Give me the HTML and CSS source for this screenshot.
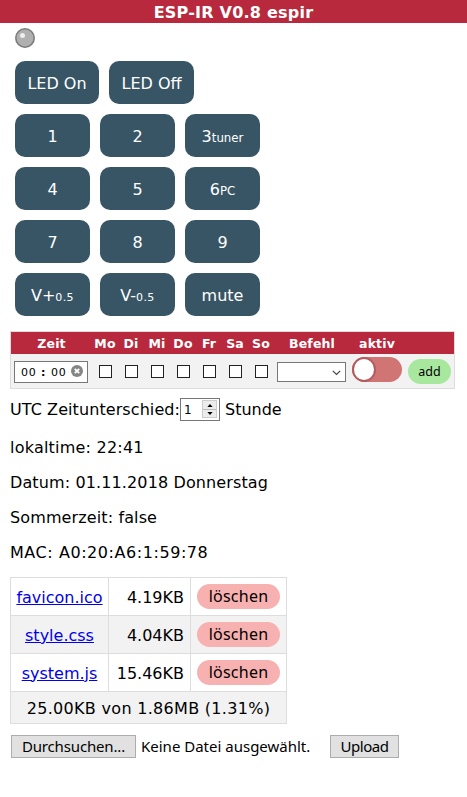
FILE: index.html
```html
<!DOCTYPE html>
<html lang="de">
<head>
<meta charset="utf-8">
<title>ESP-IR</title>
<link rel="stylesheet" href="styles.css">
</head>
<body>
<header><span class="t-title">ESP-IR V0.8 espir</span></header>
<main>
<svg class="led" width="20" height="20" viewBox="0 0 20 20"><circle cx="10" cy="10" r="9.2" fill="#b0b0b0" stroke="#7c7c7c" stroke-width="1.6"/><circle cx="7.5" cy="7.5" r="2.5" fill="#eee"/></svg>
<div class="keys leds"><button class="k-on">LED On</button><button class="k-off">LED Off</button></div>
<div class="keys pad">
<button>1</button><button>2</button><button>3<small>tuner</small></button>
<button>4</button><button>5</button><button>6<small>PC</small></button>
<button>7</button><button>8</button><button>9</button>
<button>V+<small class="step">0.5</small></button><button>V-<small class="step">0.5</small></button><button>mute</button>
</div>
<section class="timer">
<div class="row head"><span>Zeit</span><span>Mo</span><span>Di</span><span>Mi</span><span>Do</span><span>Fr</span><span>Sa</span><span>So</span><span>Befehl</span><span>aktiv</span><span></span></div>
<div class="row body">
<div class="time"><span>00</span><b>:</b><span>00</span><svg width="12" height="12" viewBox="0 0 12 12"><circle cx="6" cy="6" r="6" fill="#858585"/><path d="M3.8 3.8l4.4 4.4M8.2 3.8l-4.4 4.4" stroke="#fff" stroke-width="1.9"/></svg></div>
<i class="box"></i><i class="box"></i><i class="box"></i><i class="box"></i><i class="box"></i><i class="box"></i><i class="box"></i>
<div class="select"><svg width="9" height="6" viewBox="0 0 9 6"><path d="M.8.8L4.5 4.5 8.2.8" fill="none" stroke="#444" stroke-width="1.2"/></svg></div>
<div class="toggle"><i></i></div>
<button class="add">add</button>
</div>
</section>
<div class="utc"><span>UTC Zeitunterschied:</span><div class="num"><span>1</span><div class="spin"><i><svg width="7" height="4" viewBox="0 0 7 4"><path d="M0 4L3.5 0 7 4z"/></svg></i><i><svg width="7" height="4" viewBox="0 0 7 4"><path d="M0 0h7L3.5 4z"/></svg></i></div></div><span>Stunde</span></div>
<p class="clock">lokaltime: 22:41</p>
<p>Datum: 01.11.2018 Donnerstag</p>
<p>Sommerzeit: false</p>
<p class="mac">MAC: A0:20:A6:1:59:78</p>
<table>
<colgroup><col class="c1"><col class="c2"><col class="c3"></colgroup>
<tr><td><a href="#">favicon.ico</a></td><td class="size">4.19KB</td><td><button class="del">löschen</button></td></tr>
<tr><td><a href="#">style.css</a></td><td class="size">4.04KB</td><td><button class="del">löschen</button></td></tr>
<tr><td><a href="#">system.js</a></td><td class="size">15.46KB</td><td><button class="del">löschen</button></td></tr>
<tr class="sum"><td colspan="3">25.00KB von 1.86MB (1.31%)</td></tr>
</table>
<div class="upload"><button class="browse">Durchsuchen...</button><span>Keine Datei ausgewählt.</span><button class="send">Upload</button></div>
</main>
</body>
</html>
```
FILE: styles.css
```css
* { box-sizing: border-box; }
body { margin: 0; background: #fff; color: #000; font: 16px/20px Verdana, "DejaVu Sans", sans-serif; }
button { border: 0; padding: 0; margin: 0; font: inherit; color: inherit; white-space: nowrap; }
header { height: 23px; background: #b8293d; color: #fff; font-weight: bold; text-align: center; line-height: 25px; white-space: nowrap; }
.t-title { letter-spacing: 0.22px; }
main { padding: 5px 10px 0; }
.led { display: block; margin-left: 5px; }
.keys { margin-left: 5px; gap: 10px; color: #fff; }
.keys button { height: 43px; padding-top: 2px; background: #385566; border-radius: 10px; line-height: 41px; }
.keys small { font-size: 11.8px; }
.keys .step { font-size: 11px; letter-spacing: 0.4px; }
.leds { display: flex; margin-top: 13px; letter-spacing: 0.1px; }
.k-on { width: 84px; }
.k-off { width: 85px; }
.pad { display: grid; grid-template-columns: repeat(3, 75px); margin-top: 10px; }
.timer { width: 445px; height: 58px; margin-top: 15px; border: 1px solid #ddd; background: #f2f2f2; }
.row { display: grid; grid-template-columns: 81px repeat(7, 26px) 75px 55px 50px; justify-items: center; }
.head { height: 22px; background: #b8293d; color: #fff; font-size: 12.5px; font-weight: bold; line-height: 23px; letter-spacing: 0.15px; }
.head span:nth-child(n+9) { padding-left: 1px; }
.body { height: 34px; align-items: center; }
.time { display: flex; align-items: center; width: 74px; height: 22px; margin-top: 2px; margin-right: 1px; padding-left: 6px; border: 1px solid #777; background: #fff; font-size: 11px; line-height: 19px; letter-spacing: 0.8px; }
.time span { width: 16px; }
.time b { width: 14px; padding-left: 4px; }
.time svg { margin-left: 4px; margin-top: -2px; }
.box { width: 13px; height: 13px; margin-top: 1px; margin-left: 1px; border: 1px solid #222; background: #fff; }
.select { display: flex; align-items: center; justify-content: flex-end; width: 69px; height: 20px; margin-top: 2px; padding: 2px 4px 0 0; border: 1px solid #777; background: #fff; }
.toggle { width: 50px; height: 25px; margin-top: -3px; margin-left: 1px; border-radius: 13px; background: #d07474; }
.toggle i { display: block; width: 24px; height: 25px; border: 2px solid #b35b5f; border-radius: 50%; background: #fff; }
.add { width: 43px; height: 25px; margin-top: 1px; margin-left: 1px; border-radius: 13px; background: #a8e79e; font: 12.5px/25px Tahoma, "Noto Sans", sans-serif; }
.utc { display: flex; height: 23px; margin-top: 9px; line-height: 23px; white-space: nowrap; }
.utc > span:first-child { width: 170px; letter-spacing: 0.08px; }
.num { display: flex; justify-content: space-between; width: 40px; height: 23px; margin-right: 5px; padding: 1px 2px 2px 3px; border: 1px solid #777; font-size: 12px; line-height: 21px; }
.spin { width: 15px; height: 18px; background: #ececec; border: 1px solid #ccc; }
.spin i { display: flex; height: 8px; align-items: center; justify-content: center; }
.spin svg { width: 6px; height: 3px; }
.spin i + i { border-top: 1px solid #bbb; }
p { margin: 15px 0 0; height: 20px; line-height: 20px; letter-spacing: 0.12px; white-space: nowrap; }
.clock { letter-spacing: 0.22px; }
.mac { letter-spacing: 0.56px; }
.utc + p { margin-top: 17px; }
table { width: 277px; margin-top: 14px; border-collapse: collapse; table-layout: fixed; text-align: center; }
.c1 { width: 98px; }
.c2 { width: 82px; }
.c3 { width: 96px; }
td { height: 38px; padding: 2px 0 0; border: 1px solid #ddd; white-space: nowrap; }
td:nth-child(3) { padding: 0; }
tr:nth-child(even) { background: #f2f2f2; }
.sum td { height: 32px; letter-spacing: 0.3px; }
td.size { padding-right: 6px; text-align: right; }
a { color: #00e; }
.del { display: block; width: 83px; height: 25px; margin: 0 auto; border-radius: 13px; background: #f8b1b1; font: 16px/25px Tahoma, "Noto Sans", sans-serif; letter-spacing: 0.25px; }
.upload { display: flex; height: 23px; margin: 11px 0 0 1px; font: 15px/23px Tahoma, "Noto Sans", sans-serif; white-space: nowrap; }
.upload button { height: 23px; border: 1px solid #adadad; background: #e1e1e1; line-height: 21px; }
.upload .browse { width: 125px; letter-spacing: -0.15px; }
.upload span { width: 189px; margin-left: 5px; }
.upload .send { width: 69px; letter-spacing: -0.5px; }
```
